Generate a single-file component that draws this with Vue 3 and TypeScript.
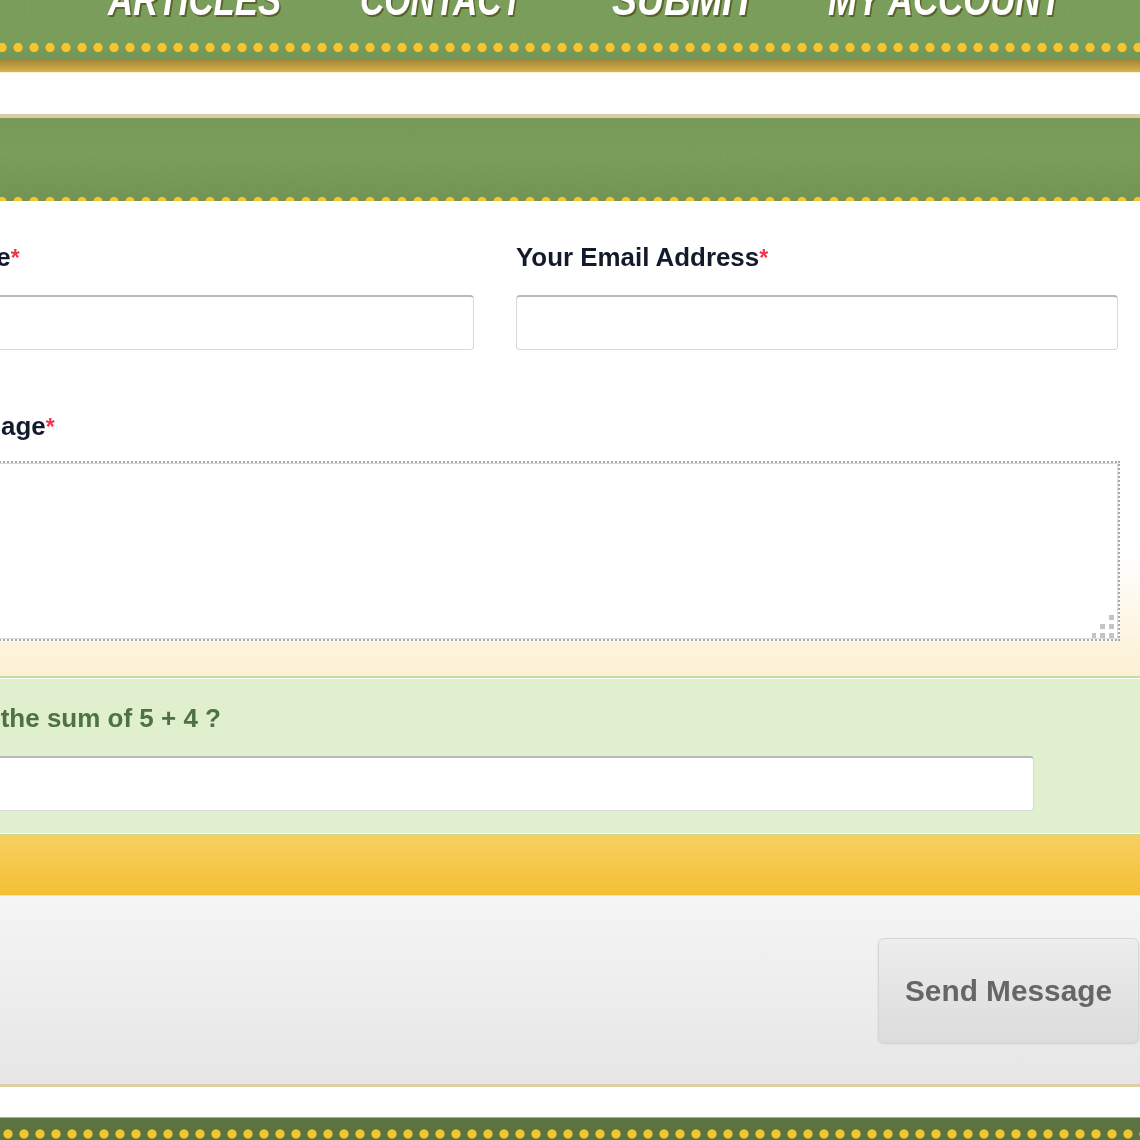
<script setup lang="ts">
const navItems = [
  { label: 'HOME', squeeze: 0.79 },
  { label: 'ARTICLES', squeeze: 0.79 },
  { label: 'CONTACT', squeeze: 0.766 },
  { label: 'SUBMIT', squeeze: 0.85 },
  { label: 'MY ACCOUNT', squeeze: 0.79 },
]
</script>

<template>
  <div class="page">
    <nav class="nav">
      <svg class="grain" aria-hidden="true">
        <filter id="paper">
          <feTurbulence type="fractalNoise" baseFrequency="0.3" numOctaves="4" seed="4" />
          <feColorMatrix values="0 0 0 0 0.2  0 0 0 0 0.3  0 0 0 0 0.1  0 0 0 0.7 -0.26" />
        </filter>
        <rect width="100%" height="100%" filter="url(#paper)" />
      </svg>
      <ul class="nav-list">
        <li v-for="item in navItems" :key="item.label">
          <span :style="{ transform: `scaleX(${item.squeeze})` }">{{ item.label }}</span>
        </li>
      </ul>
      <div class="dots nav-dots"></div>
    </nav>
    <div class="nav-edge"></div>

    <section class="card">
      <header class="card-head">
        <svg class="grain" aria-hidden="true">
          <rect width="100%" height="100%" filter="url(#paper)" />
        </svg>
        <div class="dots head-dots"></div>
      </header>

      <form class="form" @submit.prevent>
        <div class="form-main">
          <div class="field-row">
            <label class="field name-field">
              <span class="label">Your Name<i>*</i></span>
              <input class="input" type="text" />
            </label>
            <label class="field">
              <span class="label">Your Email Address<i>*</i></span>
              <input class="input" type="text" />
            </label>
          </div>
          <label class="field message">
            <span class="label">Your Message<i>*</i></span>
            <span class="area-wrap">
              <textarea class="area"></textarea>
              <svg class="grip" width="24" height="24" viewBox="0 0 24 24" aria-hidden="true">
                <rect x="17" y="1" width="5" height="5" />
                <rect x="17" y="10" width="5" height="5" />
                <rect x="8" y="10" width="5" height="5" />
                <rect x="17" y="19" width="5" height="5" />
                <rect x="8" y="19" width="5" height="5" />
                <rect x="-1" y="19" width="5" height="5" />
              </svg>
            </span>
          </label>
        </div>

        <div class="captcha">
          <p class="question">What is the sum of 5 + 4 ?</p>
          <input class="input" type="text" />
        </div>
        <div class="gold"></div>

        <div class="actions">
          <button class="send" type="submit">Send Message</button>
        </div>
      </form>
    </section>

    <footer class="footer">
      <div class="dots foot-dots"></div>
    </footer>
  </div>
</template>

<style>
html,
body {
  margin: 0;
  background: #fff;
}
</style>

<style scoped>
.page {
  position: relative;
  width: 1140px;
  height: 1140px;
  overflow: hidden;
  background: #fff;
  font-family: "Liberation Sans", Arial, sans-serif;
  filter: blur(0.45px);
}

.grain {
  position: absolute;
  inset: 0;
  width: 100%;
  height: 100%;
}

.dots {
  background-image: radial-gradient(circle at 8px 50%, #f5c52f 0, #f5c52f 4.2px, transparent 5px);
  background-size: 16px 100%;
  background-repeat: repeat-x;
}

.nav {
  position: relative;
  height: 60px;
  overflow: hidden;
  background: linear-gradient(#7a9e5b, #7a9e5b 70%, #739555);
}

.nav-list {
  position: relative;
  display: grid;
  grid-template-columns: 108px 252px 252px 216px auto;
  margin: -25px 0 0;
  padding: 0;
  list-style: none;
  font-size: 44px;
  line-height: 50px;
  font-style: italic;
  font-weight: 700;
  color: #fff;
  text-shadow: 2px 2px 0 rgba(80, 80, 20, 0.75);
  white-space: nowrap;
}

.nav-list span {
  display: inline-block;
  transform-origin: left;
}

.nav-list li:first-child {
  margin-left: -120px;
}

.nav-dots {
  position: absolute;
  left: -6px;
  right: 0;
  top: 42px;
  height: 11px;
}

.nav-edge {
  height: 12px;
  margin-bottom: 41px;
  background: linear-gradient(#a5853a, #d9b44c);
  border-bottom: 1px solid #fdf3d8;
}

.card-head {
  position: relative;
  height: 83px;
  overflow: hidden;
  border-top: 4px solid #d9cda6;
  background: linear-gradient(#779a59, #7a9e5b 45%, #729353);
}

.head-dots {
  position: absolute;
  left: -6px;
  right: 0;
  bottom: -6px;
  height: 11px;
}

.form-main {
  margin-left: -128px;
  padding: 40px 20px 35px 0;
  background: linear-gradient(#fff 0, #fff 74%, #fdf0d3 100%);
}

.field-row {
  display: grid;
  grid-template-columns: 602px 602px;
  column-gap: 42px;
}

.field {
  display: block;
}

.name-field .label {
  padding-left: 4px;
}

.label {
  display: block;
  margin-bottom: 22px;
  font-size: 25.9px;
  line-height: 32px;
  font-weight: 700;
  color: #131a2b;
}

.label i {
  font-style: normal;
  font-size: 23px;
  line-height: 0;
  color: #f0364a;
}

.input {
  display: block;
  box-sizing: border-box;
  width: 100%;
  height: 55px;
  padding: 0 12px;
  background: #fff;
  border: 1px solid #d8d8d8;
  border-top: 2px solid #b8b8b8;
  border-radius: 4px;
}

.message {
  margin-top: 60px;
}

.message .label {
  margin-bottom: 19px;
}

.area-wrap {
  position: relative;
  display: block;
}

.area {
  display: block;
  box-sizing: border-box;
  width: 100%;
  height: 180px;
  background: #fff;
  border: 2px dotted #a8a8a8;
  outline: 1px solid #dcdcdc;
  outline-offset: -3px;
  resize: none;
}

.grip {
  position: absolute;
  right: 4px;
  bottom: 3px;
  fill: #c4c4c4;
  pointer-events: none;
}

.captcha {
  margin-left: -128px;
  padding: 24px 106px 22px 0;
  background: #e0efcd;
  border-top: 2px solid #bfe09a;
  box-shadow: inset 0 1px 0 #fff;
  border-bottom: 1px solid #fff;
}

.question {
  margin: 0 0 22px 29px;
  font-size: 26px;
  line-height: 32px;
  font-weight: 700;
  color: #4f7245;
}

.gold {
  height: 60px;
  border-top: 1px solid #c6dd8c;
  background: linear-gradient(#f6d060, #f4c033);
}

.actions {
  display: flex;
  justify-content: flex-end;
  box-sizing: border-box;
  height: 192px;
  padding: 42px 1px 0 0;
  background: linear-gradient(#f5f5f5, #e6e6e6);
  border-top: 1px solid #e2e2e2;
  border-bottom: 3px solid #dccfa8;
}

.send {
  width: 261px;
  height: 105px;
  padding: 0;
  font-family: inherit;
  font-size: 29.8px;
  font-weight: 700;
  color: #666;
  background: linear-gradient(#ededed, #dcdcdc);
  border: 1px solid #d6d6d6;
  border-radius: 6px;
  box-shadow: 0 1px 2px rgba(0, 0, 0, 0.12);
}

.footer {
  position: relative;
  height: 60px;
  margin-top: 30px;
  background: #5c7442;
  border-top: 1px solid #a9a9a9;
}

.foot-dots {
  position: absolute;
  left: 0;
  right: 0;
  top: 10px;
  height: 12px;
}
</style>
